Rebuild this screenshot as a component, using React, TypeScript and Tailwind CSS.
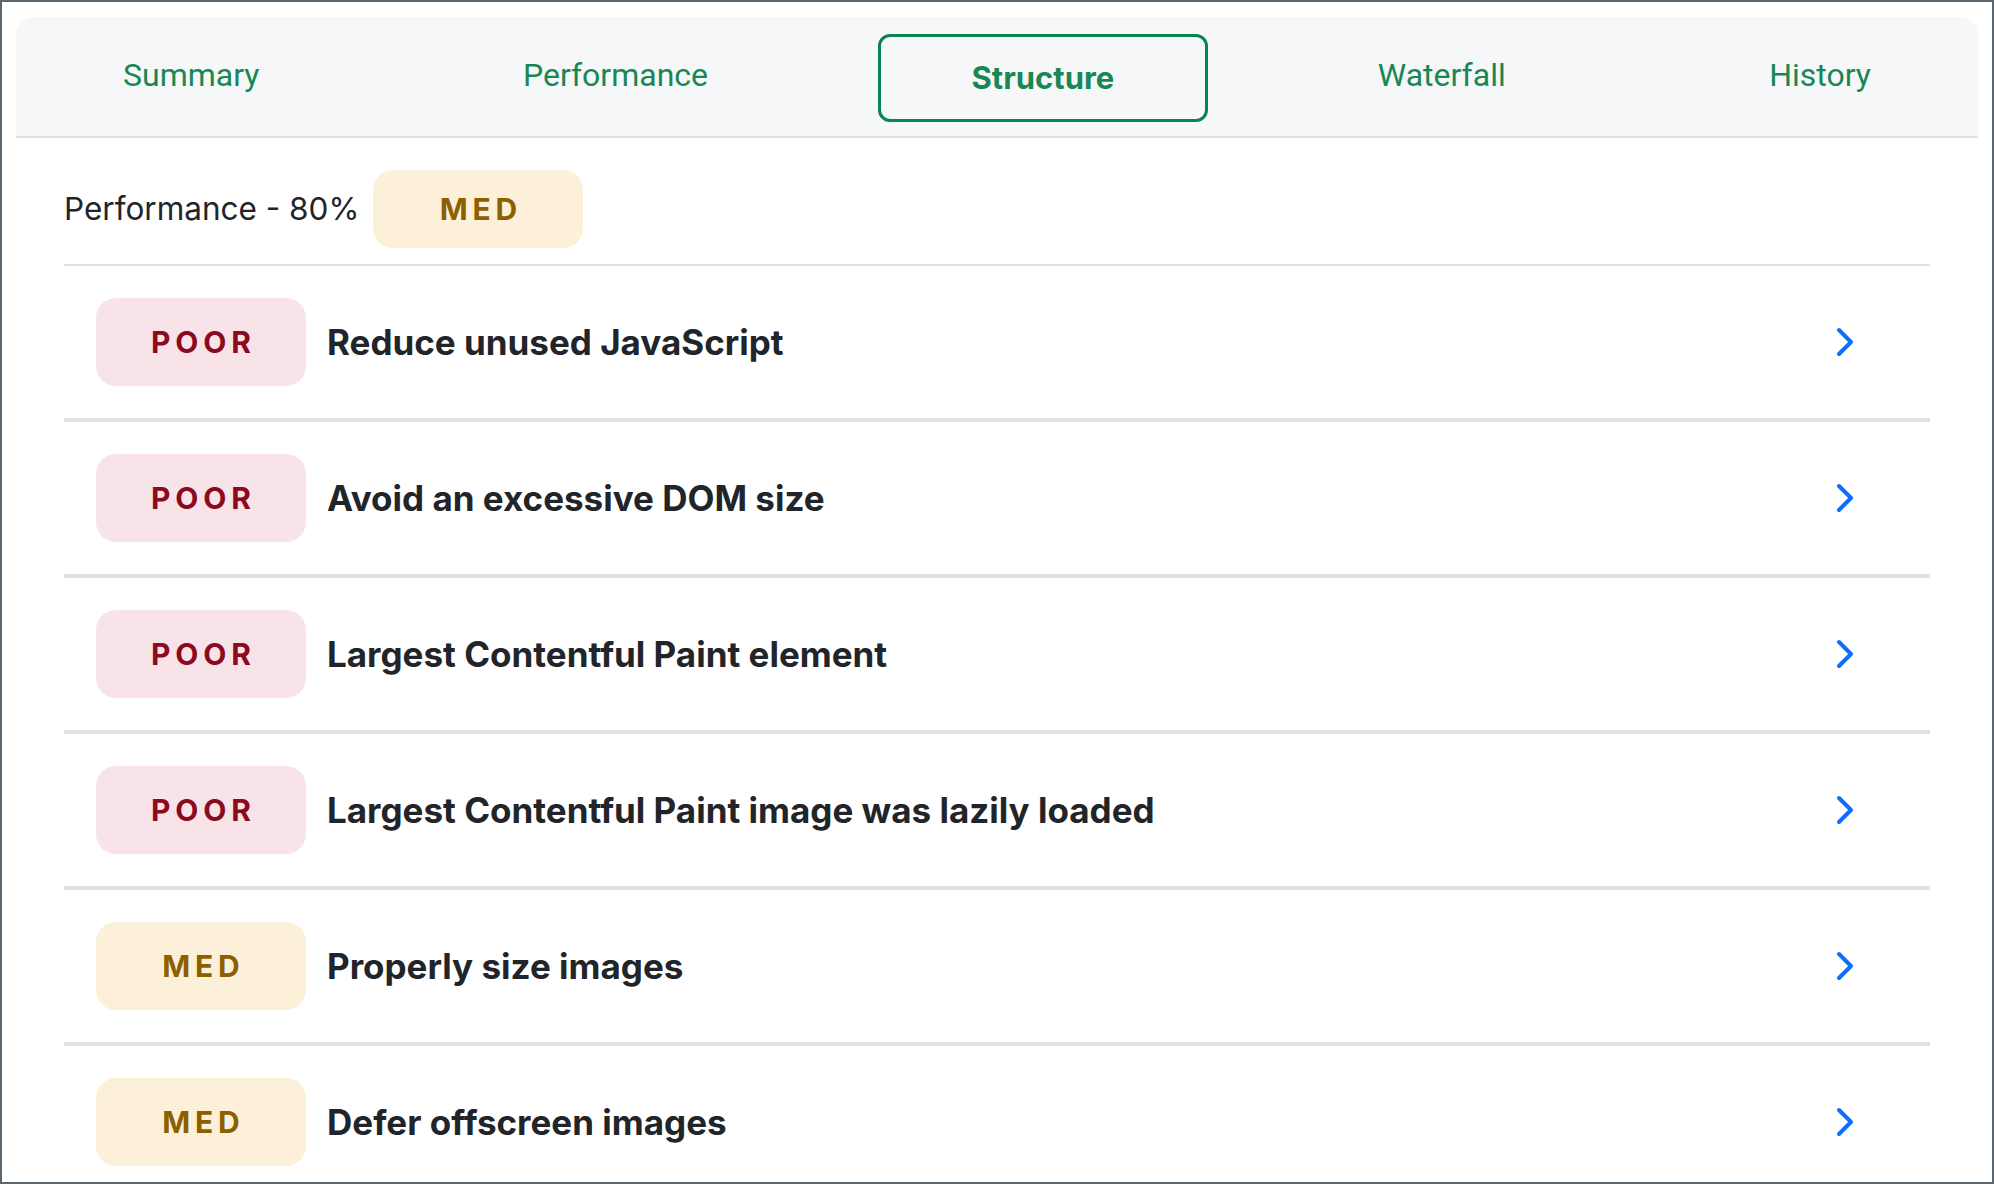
import React from 'react';

type Level = 'poor' | 'med';

interface Audit {
  level: Level;
  title: string;
}

const tabs = ['Summary', 'Performance', 'Structure', 'Waterfall', 'History'];

const audits: Audit[] = [
  { level: 'poor', title: 'Reduce unused JavaScript' },
  { level: 'poor', title: 'Avoid an excessive DOM size' },
  { level: 'poor', title: 'Largest Contentful Paint element' },
  { level: 'poor', title: 'Largest Contentful Paint image was lazily loaded' },
  { level: 'med', title: 'Properly size images' },
  { level: 'med', title: 'Defer offscreen images' },
];

function Badge({ level, tall }: { level: Level; tall?: boolean }) {
  const poor = level === 'poor';
  return (
    <div
      className={`flex w-[210px] shrink-0 items-center justify-center rounded-[20px] ${
        tall ? 'h-[88px]' : 'h-[78px]'
      } ${poor ? 'bg-[#f8e4e8] text-[#8c0a20]' : 'bg-[#fcf0d8] text-[#8c6000]'}`}
    >
      <span className="pl-[0.16em] text-[30px] font-bold tracking-[0.16em]">
        {poor ? 'POOR' : 'MED'}
      </span>
    </div>
  );
}

function Chevron() {
  return (
    <svg width="18" height="30" viewBox="0 0 18 30" fill="none" className="shrink-0">
      <path
        d="M3 3 L15 15 L3 27"
        stroke="#0d6efd"
        strokeWidth="4"
        strokeLinecap="round"
        strokeLinejoin="round"
      />
    </svg>
  );
}

export default function App() {
  const active = 'Structure';

  return (
    <div
      className="h-screen overflow-hidden border-2 border-[#5a6670] bg-white px-[14px] pt-[15px] text-[#212529]"
      style={{ fontFamily: 'Inter, "Noto Sans", sans-serif' }}
    >
      {/* Tabs */}
      <div
        className="flex h-[121px] items-center justify-between rounded-t-[18px] border-b-2 border-[#dee2e6] bg-[#f6f7f9] px-[13px]"
        style={{ fontFamily: 'Roboto, sans-serif' }}
      >
        {tabs.map(tab =>
          tab === active ? (
            <div
              key={tab}
              className="mt-[3px] flex h-[88px] items-center justify-center rounded-[12px] border-[3px] border-[#0a8450] px-[91px] text-[31px] font-bold text-[#198754]"
              style={{ fontFamily: 'Inter, sans-serif' }}
            >
              {tab}
            </div>
          ) : (
            <div
              key={tab}
              className="mb-[3px] flex h-[88px] items-center justify-center px-[94px] text-[32px] text-[#198754]"
            >
              {tab}
            </div>
          )
        )}
      </div>

      <div className="px-12">
        {/* Header */}
        <div className="flex items-center gap-[14px] border-b-2 border-[#dee2e6] pt-8 pb-4">
          <span className="text-[31.5px]">Performance - 80%</span>
          <Badge level="med" />
        </div>

        {/* Audit rows */}
        {audits.map(audit => (
          <div
            key={audit.title}
            className="flex items-center border-b-4 border-[#dee2e6] py-8 pl-8 pr-[76px]"
          >
            <Badge level={audit.level} tall />
            <span className="ml-[21px] flex-1 text-[35px] font-bold">{audit.title}</span>
            <Chevron />
          </div>
        ))}
      </div>
    </div>
  );
}
